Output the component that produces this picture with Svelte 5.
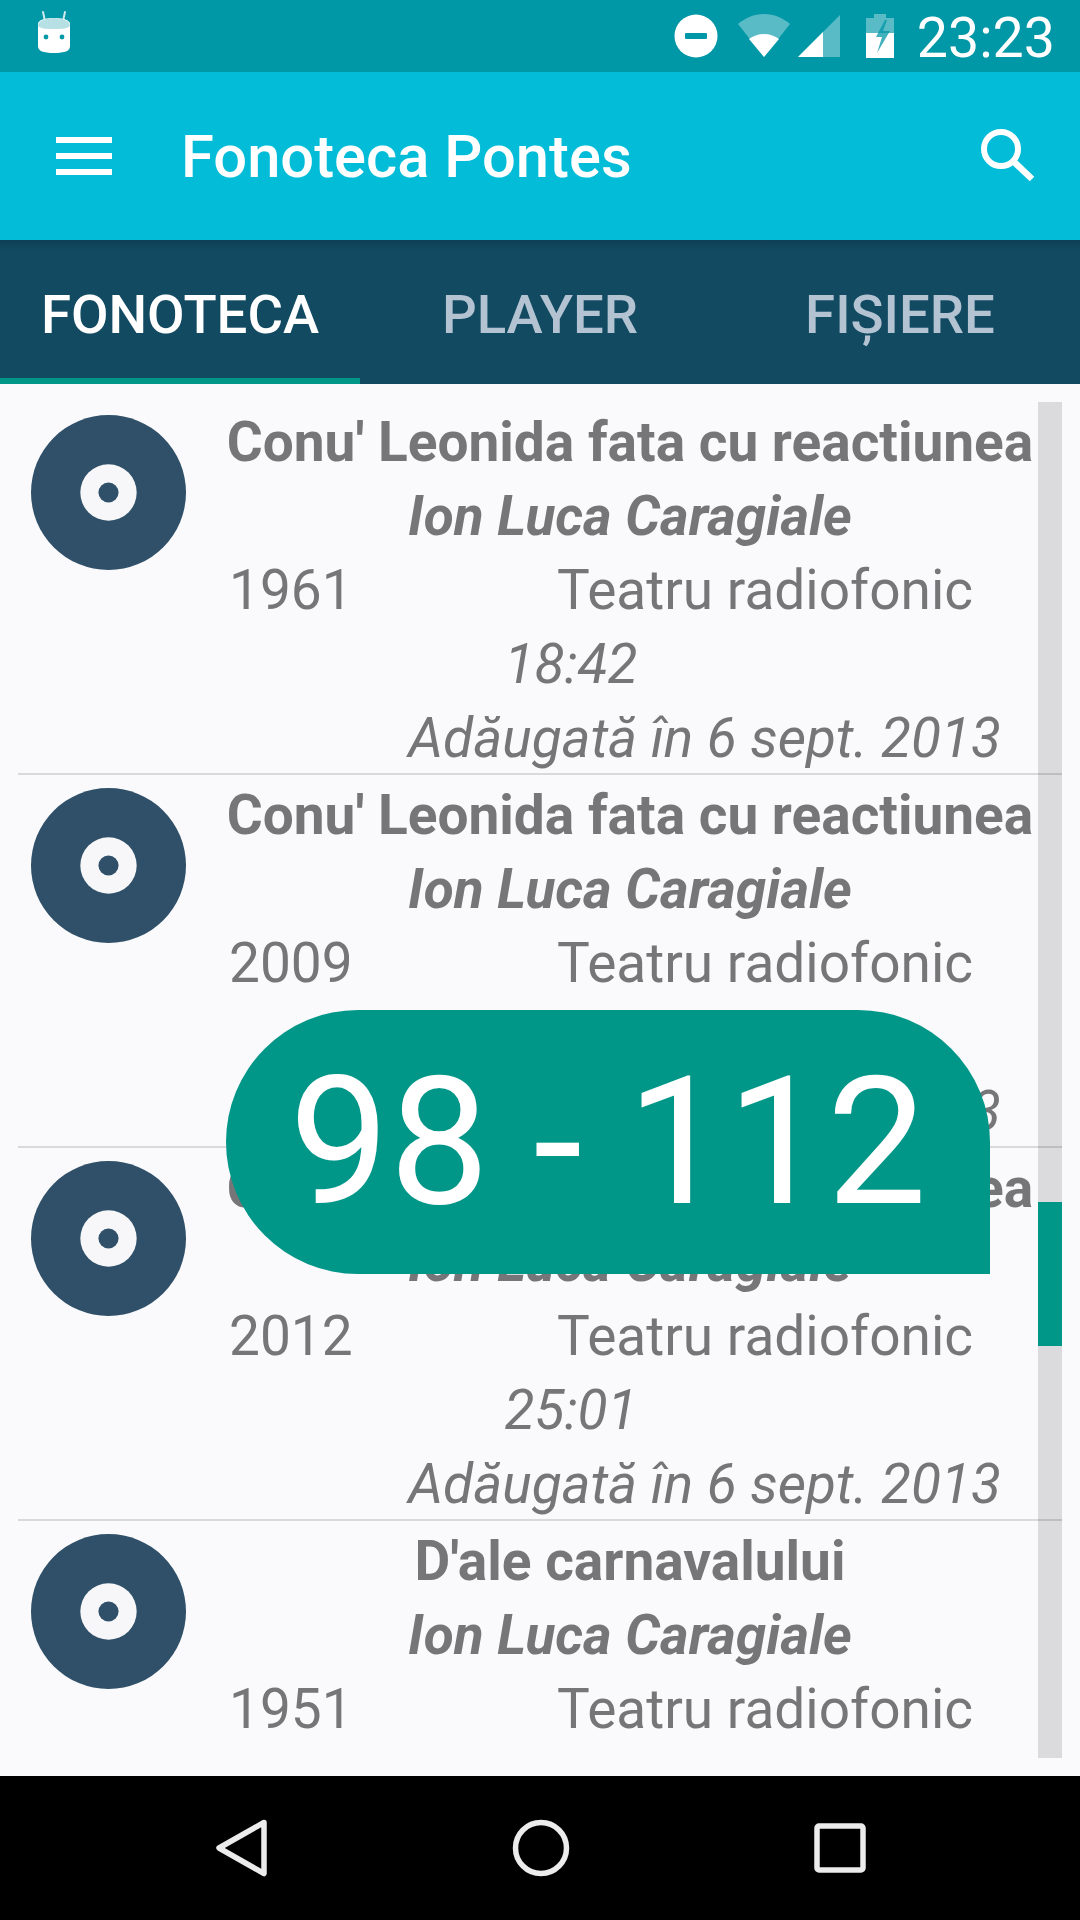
<script>
  const rows = [
    { title: "Conu' Leonida fata cu reactiunea", year: '1961', dur: '18:42', added: true },
    { title: "Conu' Leonida fata cu reactiunea", year: '2009', dur: '21:17', added: true },
    { title: "Conu' Leonida fata cu reactiunea", year: '2012', dur: '25:01', added: true },
    { title: "D'ale carnavalului", year: '1951', dur: '', added: false }
  ];
</script>

<div class="screen">
  <header class="status">
    <svg class="droid" width="36" height="44" viewBox="0 0 36 44">
      <path d="M7 2l2 9M29 2l-2 9" stroke="#cfe9ec" stroke-width="2" stroke-linecap="round" fill="none"/>
      <path d="M2 14c0-4 7-6 16-6s16 2 16 6v22c0 5-5 7-16 7S2 41 2 36z" fill="#fff"/>
      <path d="M2 16c0-5 7-8 16-8s16 3 16 8c-3 3-9 3-16 3S5 19 2 16z" fill="#b7e0e5"/>
      <circle cx="10" cy="27" r="2.4" fill="#0097a7"/><circle cx="26" cy="27" r="2.4" fill="#0097a7"/>
    </svg>
    <div class="status-right">
      <svg width="44" height="44" viewBox="0 0 44 44"><circle cx="22" cy="22" r="21.5" fill="#fff"/><rect x="11" y="19" width="22" height="6" rx="1" fill="#0097a7"/></svg>
      <svg class="wifi" width="54" height="44" viewBox="0 0 54 44"><path d="M1 10C8 4 17 0 27 0s19 4 26 10L27 43z" fill="#fff" opacity=".35"/><path d="M12 25c4-3 9-5 15-5s11 2 15 5L27 43z" fill="#fff"/></svg>
      <svg class="signal" width="43" height="44" viewBox="0 0 43 44"><path d="M42 1v42H0z" fill="#fff" opacity=".35"/><path d="M25 18v25H0z" fill="#fff"/></svg>
      <svg class="batt" width="30" height="44" viewBox="0 0 30 44"><path d="M9 0h12v4h8v40H1V4h8z" fill="#fff" opacity=".35"/><path d="M1 19h28v25H1z" fill="#fff"/><path d="M20 6l-9 17h6l-5 16 13-22h-7l4-11z" fill="#0097a7" opacity=".75"/></svg>
      <span class="time">23:23</span>
    </div>
  </header>

  <div class="toolbar">
    <div class="burger"><i></i><i></i><i></i></div>
    <h1>Fonoteca Pontes</h1>
    <svg class="search" width="54" height="54" viewBox="0 0 54 54"><circle cx="21" cy="21" r="17" fill="none" stroke="#fff" stroke-width="6"/><path d="M33 33l19 18" stroke="#fff" stroke-width="6.5" fill="none"/></svg>
  </div>

  <nav class="tabs">
    <div class="tab active">FONOTECA</div>
    <div class="tab">PLAYER</div>
    <div class="tab">FIȘIERE</div>
  </nav>

  <main class="content">
    <div class="list">
      {#each rows as r}
        <article class="row">
          <svg class="disc" width="155" height="155" viewBox="0 0 154 154"><circle cx="77" cy="77" r="77" fill="#2f5068"/><circle cx="77" cy="77" r="28" fill="#f7f7f9"/><circle cx="77" cy="77" r="10" fill="#2f5068"/></svg>
          <div class="info">
            <div class="line title">{r.title}</div>
            <div class="line author">Ion Luca Caragiale</div>
            <div class="line meta"><span class="year">{r.year}</span><span class="genre">Teatru radiofonic</span></div>
            {#if r.added}
              <div class="line dur">{r.dur}</div>
              <div class="line added">Adăugată în 6 sept. 2013</div>
            {/if}
          </div>
        </article>
      {/each}
    </div>
    <div class="track"><div class="thumb"></div></div>
    <div class="bubble">98 - 112</div>
  </main>

  <footer class="nav">
    <svg width="60" height="60" viewBox="0 0 60 60"><path d="M51 4.5L6 30l45 25.500z" transform="translate(2 0)" fill="none" stroke="#ececec" stroke-width="5.500" stroke-linejoin="round"/></svg>
    <svg width="60" height="60" viewBox="0 0 60 60"><circle cx="30" cy="30" r="25.500" fill="none" stroke="#ececec" stroke-width="5.500"/></svg>
    <svg width="60" height="60" viewBox="0 0 60 60"><rect x="7" y="8" width="46" height="44" rx="2" fill="none" stroke="#ececec" stroke-width="5.500"/></svg>
  </footer>
</div>

<style>
  :global(body) { margin: 0; }
  .screen { width: 1080px; height: 1920px; display: flex; flex-direction: column; font-family: Roboto, sans-serif; background: #fafafc; overflow: hidden; }
  .status { height: 72px; flex: none; background: #0097a7; display: flex; align-items: center; justify-content: space-between; padding: 0 25px 0 36px; box-sizing: border-box; }
  .droid { margin-top: -8px; }
  .status-right { display: flex; align-items: center; }
  .wifi { margin-left: 19px; }
  .signal { margin-left: 7px; }
  .batt { margin-left: 24px; }
  .time { color: #fff; font-size: 55.5px; margin-left: 22px; line-height: 78px; height: 72px; }
  .toolbar { height: 168px; flex: none; background: #02bcd8; display: flex; align-items: center; padding: 0 46px 0 56px; box-sizing: border-box; }
  .burger { width: 56px; display: flex; flex-direction: column; gap: 10px; }
  .burger i { display: block; height: 6px; background: #fff; }
  h1 { margin: 4px 0 0 69px; font-size: 59.7px; font-weight: 500; color: #fff; flex: 1; line-height: 1; }
  .search { margin-top: -2px; }
  .tabs { height: 144px; flex: none; display: flex; background: linear-gradient(#0f3f56, #124a62 10px); }
  .tab { flex: 1; display: flex; align-items: center; justify-content: center; color: #b3c3d1; font-size: 54.500px; font-weight: 500; box-sizing: border-box; padding-top: 4px; }
  .tab.active { color: #fff; border-bottom: 6px solid #009688; padding-top: 10px; }
  .content { flex: 1; position: relative; background: #fafafc; padding: 18px; box-sizing: border-box; min-height: 0; }
  .list { height: 100%; overflow: hidden; }
  .row { height: 373px; box-sizing: border-box; border-bottom: 2px solid #d9d9dc; display: flex; color: #767578; }
  .row:last-child { border-bottom: none; height: auto; }
  .disc { flex: none; margin: 13px 0 0 13px; }
  .info { width: 810px; margin-left: 39px; margin-top: 3px; }
  .line { height: 74px; line-height: 75px; font-size: 55px; white-space: nowrap; }
  .title { font-weight: 700; text-align: center; }
  .author { font-weight: 700; font-style: italic; text-align: center; }
  .meta { display: flex; }
  .year { width: 332px; padding-left: 4px; box-sizing: border-box; }
  .dur { font-style: italic; text-align: center; width: 692px; }
  .added { font-style: italic; text-align: right; padding-right: 34px; }
  .track { position: absolute; top: 18px; bottom: 18px; right: 18px; width: 24px; background: rgba(0,0,0,.12); }
  .thumb { position: absolute; top: 800px; left: 0; right: 0; height: 144px; background: #009688; }
  .bubble { position: absolute; left: 226px; top: 626px; width: 764px; height: 264px; background: #009688; color: #fff; font-size: 178px; font-weight: 400; line-height: 264px; text-align: center; border-radius: 132px 132px 0 132px; }
  .nav { height: 144px; flex: none; background: #000; display: flex; align-items: center; justify-content: space-between; padding: 0 210px 0 211px; box-sizing: border-box; }
</style>
